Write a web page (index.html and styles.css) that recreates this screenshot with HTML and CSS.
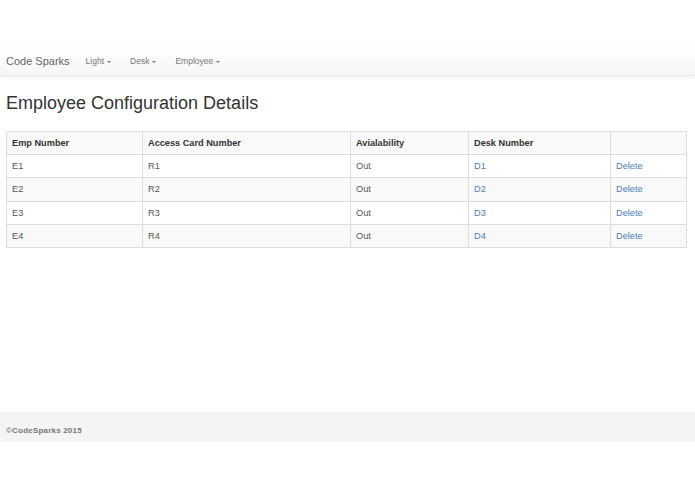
FILE: index.html
```html
<!DOCTYPE html>
<html>
<head>
<meta charset="utf-8">
<title>Employee Configuration Details</title>
<link rel="stylesheet" href="styles.css">
</head>
<body>
<div class="top-space"></div>
<nav class="navbar">
  <a class="brand" href="#">Code Sparks</a>
  <ul class="nav">
    <li><a href="#">Light<span class="caret"></span></a></li>
    <li><a href="#">Desk<span class="caret"></span></a></li>
    <li><a href="#">Employee<span class="caret"></span></a></li>
  </ul>
</nav>
<main class="content">
  <h2 class="title">Employee Configuration Details</h2>
  <table class="grid">
    <colgroup>
      <col class="c1"><col class="c2"><col class="c3"><col class="c4"><col class="c5">
    </colgroup>
    <tbody>
      <tr><th>Emp Number</th><th>Access Card Number</th><th>Avialability</th><th>Desk Number</th><th></th></tr>
      <tr><td>E1</td><td>R1</td><td>Out</td><td><a href="#">D1</a></td><td><a href="#">Delete</a></td></tr>
      <tr><td>E2</td><td>R2</td><td>Out</td><td><a href="#">D2</a></td><td><a href="#">Delete</a></td></tr>
      <tr><td>E3</td><td>R3</td><td>Out</td><td><a href="#">D3</a></td><td><a href="#">Delete</a></td></tr>
      <tr><td>E4</td><td>R4</td><td>Out</td><td><a href="#">D4</a></td><td><a href="#">Delete</a></td></tr>
    </tbody>
  </table>
</main>
<footer class="footer">&copy;CodeSparks 2015</footer>
</body>
</html>
```
FILE: styles.css
```css
html, body {
  margin: 0;
  padding: 0;
  background: #fff;
  font-family: "Liberation Sans", Arial, sans-serif;
  color: #555;
}
.top-space {
  height: 47px;
}
.navbar {
  height: 29px;
  display: flex;
  align-items: center;
  padding: 0 6px;
  background: linear-gradient(to bottom, #ffffff 0%, #f6f6f6 100%);
  border-bottom: 1px solid #e8e8e8;
  box-shadow: 0 1px 4px rgba(0,0,0,0.07);
  box-sizing: border-box;
}
.brand {
  font-size: 11px;
  color: #666;
  text-decoration: none;
  margin-right: 16px;
  line-height: 14px;
}
.nav {
  list-style: none;
  margin: 0;
  padding: 0;
  display: flex;
  align-items: center;
}
.nav li a {
  display: flex;
  align-items: center;
  font-size: 8.5px;
  line-height: 12px;
  color: #777;
  text-decoration: none;
  margin-right: 19px;
}
.caret {
  display: inline-block;
  width: 0;
  height: 0;
  margin-left: 3px;
  margin-top: 1px;
  border-top: 2.5px solid #777;
  border-left: 2.5px solid transparent;
  border-right: 2.5px solid transparent;
}
.content {
  padding: 0 6px 0 6px;
  min-height: 336px;
  box-sizing: border-box;
}
.title {
  font-size: 18px;
  font-weight: normal;
  color: #333;
  margin: 0;
  padding-top: 17px;
  height: 38px;
  box-sizing: content-box;
  line-height: 20px;
}
.grid {
  width: 680px;
  border-collapse: collapse;
  border: 1px solid #ddd;
  font-size: 9.2px;
  table-layout: fixed;
}
.c1 { width: 136px; }
.c2 { width: 208px; }
.c3 { width: 118px; }
.c4 { width: 142px; }
.c5 { width: 76px; }
.grid th, .grid td {
  border: 1px solid #ddd;
  height: 23.2px;
  padding: 0 5px;
  text-align: left;
  vertical-align: middle;
  box-sizing: border-box;
}
.grid th {
  font-weight: bold;
  color: #333;
}
.grid tr:nth-child(odd) {
  background: #f9f9f9;
}
.grid a {
  color: #4a80bc;
  text-decoration: none;
}
.footer {
  height: 30px;
  background: #f4f4f4;
  display: flex;
  align-items: center;
  padding: 6px 6px 0;
  box-sizing: border-box;
  font-size: 8px;
  font-weight: bold;
  color: #777;
  letter-spacing: 0.2px;
}
```
